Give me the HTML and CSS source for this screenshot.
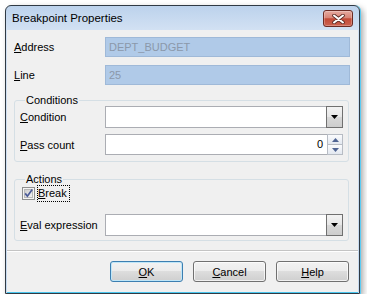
FILE: index.html
```html
<!DOCTYPE html>
<html>
  <head>
    <meta charset="UTF-8" />
    <title>Breakpoint Properties</title>
    <link rel="stylesheet" href="styles.css">
  </head>
  <body>
    <div class="window">
      <div class="titlebar">
        <span class="title">Breakpoint Properties</span>
        <span class="close">
          <svg width="13" height="10" viewBox="0 0 13 10">
            <path d="M2 1.5 L11 8.5 M11 1.5 L2 8.5" stroke="#5a2a24" stroke-width="3.6" stroke-linecap="round" fill="none" />
            <path d="M2 1.5 L11 8.5 M11 1.5 L2 8.5" stroke="#ffffff" stroke-width="2" stroke-linecap="round" fill="none" />
          </svg>
        </span>
      </div>

      <div class="client">
        <div class="fields">
          <div class="row">
            <label><u>A</u>ddress</label>
            <div class="edit readonly">DEPT_BUDGET</div>
          </div>
          <div class="row line">
            <label><u>L</u>ine</label>
            <div class="edit readonly">25</div>
          </div>

          <fieldset class="group conditions">
            <legend>Conditions</legend>
            <div class="row">
              <label><u>C</u>ondition</label>
              <div class="combo">
                <span class="combo-field"></span>
                <span class="drop">
                  <svg width="7" height="4" viewBox="0 0 7 4"><polygon points="0,0 7,0 3.5,4" fill="#000" /></svg>
                </span>
              </div>
            </div>
            <div class="row spin-row">
              <label><u>P</u>ass count</label>
              <div class="spin-edit">
                <span class="spin-field">0</span>
                <span class="spin">
                  <span class="spin-btn">
                    <svg width="7" height="4" viewBox="0 0 7 4"><polygon points="0,4 7,4 3.5,0" fill="#4f6493" /></svg>
                  </span>
                  <span class="spin-btn">
                    <svg width="7" height="4" viewBox="0 0 7 4"><polygon points="0,0 7,0 3.5,4" fill="#4f6493" /></svg>
                  </span>
                </span>
              </div>
            </div>
          </fieldset>

          <fieldset class="group actions">
            <legend>Actions</legend>
            <div class="check">
              <svg class="box" width="13" height="13" viewBox="0 0 13 13">
                <defs>
                  <linearGradient id="cb" x1="0" y1="0" x2="1" y2="1">
                    <stop offset="0" stop-color="#cbcbcb" />
                    <stop offset="1" stop-color="#f4f4f4" />
                  </linearGradient>
                </defs>
                <rect x="0.5" y="0.5" width="12" height="12" fill="#f4f4f4" stroke="#8e8f8f" />
                <rect x="2.5" y="2.5" width="8" height="8" fill="url(#cb)" stroke="#b8b8b8" />
                <path d="M3.2 6.4 L5.4 9.2 L10.2 2.6" stroke="#4a5a98" stroke-width="1.7" fill="none" />
              </svg>
              <span class="focus"><u>B</u>reak</span>
            </div>
            <div class="row eval-row">
              <label><u>E</u>val expression</label>
              <div class="combo">
                <span class="combo-field"></span>
                <span class="drop">
                  <svg width="7" height="4" viewBox="0 0 7 4"><polygon points="0,0 7,0 3.5,4" fill="#000" /></svg>
                </span>
              </div>
            </div>
          </fieldset>
        </div>

        <div class="separator"></div>

        <div class="buttons">
          <button class="default"><u>O</u>K</button>
          <button><u>C</u>ancel</button>
          <button><u>H</u>elp</button>
        </div>
      </div>
    </div>
  </body>
</html>
```

FILE: styles.css
```css
:root {
  --color-face: rgb(240 240 240);
  --color-frame: rgb(48 58 68);
  --color-edit-border: rgb(171 173 179);
  --font-family: "Liberation Sans", Arial, sans-serif;
}

* {
  box-sizing: border-box;
  margin: 0;
  padding: 0;
}

body {
  background-color: #fff;
  color: #000;
  font-family: var(--font-family);
  font-size: 11px;
}

u {
  text-decoration: underline;
  text-underline-offset: 1px;
}

.window {
  background: linear-gradient(#bcd2ec, #d2e1f3 24px, #c6daf0);
  border: 1px solid var(--color-frame);
  border-radius: 6px 6px 0 0;
  box-shadow: 1px 0 0 #5ccbf2, 3px 3px 6px rgb(0 0 0 / 35%);
  display: flex;
  flex-direction: column;
  height: 289px;
  margin: 5px 0 0 5px;
  width: 355px;
}

.titlebar {
  align-items: center;
  display: flex;
  height: 24px;
  justify-content: space-between;
  padding-left: 6px;
}

.title {
  font-size: 11.5px;
}

.close {
  align-items: center;
  align-self: flex-start;
  background: linear-gradient(#e6aaa0, #d88476 45%, #c24a36 52%, #cc6250);
  border: 1px solid #6b2b24;
  border-radius: 3px;
  box-shadow: inset 0 0 0 1px rgb(255 255 255 / 25%);
  display: flex;
  height: 17px;
  justify-content: center;
  margin: 4px 6px 0 0;
  width: 30px;
}

.client {
  background-color: var(--color-face);
  border-bottom: 1px solid #4ac6ee;
  display: flex;
  flex: 1;
  flex-direction: column;
  margin: 0 1px;
}

.fields {
  display: flex;
  flex-direction: column;
  padding: 7px 8px 0 7px;
}

.row {
  align-items: center;
  display: flex;
}

.row > label {
  width: 91px;
}

.group .row > label {
  width: 85px;
}

.line {
  margin-top: 8px;
}

.edit {
  border: 1px solid var(--color-edit-border);
  flex: 1;
  height: 20px;
  line-height: 18px;
  padding-left: 3px;
}

.readonly {
  background-color: #b0cae8;
  border-color: #9fb9d8;
  color: #8b98aa;
}

/* group boxes */

.group {
  border: 1px solid #d5dfe5;
  border-radius: 3px;
  margin-right: 1px;
  padding: 0 5px 6px;
}

.group legend {
  line-height: 12px;
  margin-left: 5px;
  padding: 0 1px;
}

.conditions {
  margin-top: 9px;
}

.actions {
  margin-top: 11px;
  padding-bottom: 4px;
}

.combo {
  display: flex;
  flex: 1;
  height: 22px;
}

.combo-field {
  background-color: #fff;
  border: 1px solid var(--color-edit-border);
  border-right: none;
  flex: 1;
}

.drop {
  align-items: center;
  background: linear-gradient(#f3f3f3, #e6e6e6 50%, #d8d8d8 50%, #cdcdcd);
  border: 1px solid #707070;
  display: flex;
  justify-content: center;
  width: 17px;
}

.spin-row {
  margin-top: 6px;
}

.spin-edit {
  display: flex;
  flex: 1;
  height: 21px;
}

.spin-field {
  background-color: #fff;
  border: 1px solid var(--color-edit-border);
  border-right: none;
  flex: 1;
  line-height: 19px;
  padding-right: 4px;
  text-align: right;
}

.spin {
  display: flex;
  flex-direction: column;
  width: 16px;
}

.spin-btn {
  align-items: center;
  background: linear-gradient(#fafbfd, #e3e8f0);
  border: 1px solid #b7bcc4;
  display: flex;
  flex: 1;
  justify-content: center;
}

.spin-btn + .spin-btn {
  border-top: none;
}

.check {
  align-items: center;
  display: flex;
  height: 17px;
  margin-left: 2px;
}

.focus {
  border: 1px dotted #000;
  line-height: 13px;
  margin-left: 2px;
  padding: 1px 2px 1px 0;
}

.eval-row {
  margin-top: 12px;
}

/* footer */

.separator {
  border-bottom: 1px solid #fff;
  border-top: 1px solid #c4c4c4;
  margin-top: 9px;
}

.buttons {
  column-gap: 10px;
  display: flex;
  justify-content: flex-end;
  padding: 9px 9px 0 0;
}

button {
  background: linear-gradient(#f2f2f2, #ebebeb 50%, #dddddd 50%, #cfcfcf);
  border: 1px solid #707070;
  border-radius: 3px;
  box-shadow: inset 0 0 0 1px rgb(255 255 255 / 70%);
  color: #000;
  font-family: var(--font-family);
  font-size: 11px;
  height: 21px;
  width: 73px;
}

button.default {
  border-color: #3c7fb1;
  box-shadow: inset 0 0 0 1px #bfe6f8;
}
```
